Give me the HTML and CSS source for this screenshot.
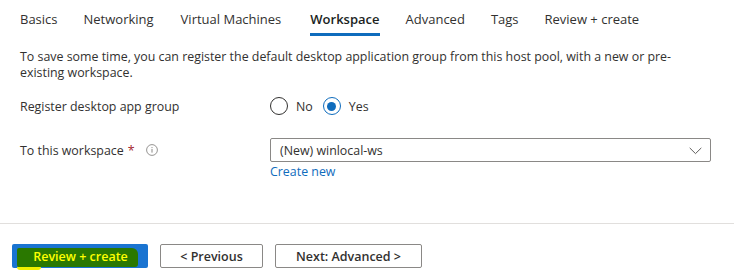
FILE: index.html
```html
<!DOCTYPE html>
<html>
<head>
<meta charset="utf-8">
<link rel="stylesheet" href="styles.css">
</head>
<body>
<div class="page">
  <nav class="tabs">
    <div class="tab">Basics</div>
    <div class="tab">Networking</div>
    <div class="tab tab-vm">Virtual Machines</div>
    <div class="tab active">Workspace</div>
    <div class="tab">Advanced</div>
    <div class="tab">Tags</div>
    <div class="tab">Review + create</div>
  </nav>
  <main class="content">
    <p class="intro">To save some time, you can register the default desktop application group from this host pool, with a new or pre-existing workspace.</p>
    <div class="row row-radio">
      <div class="label">Register desktop app group</div>
      <div class="control radios">
        <label class="radio"><span class="circle"></span><span>No</span></label>
        <label class="radio"><span class="circle checked"></span><span>Yes</span></label>
      </div>
    </div>
    <div class="row row-select">
      <div class="label">To this workspace <span class="req">*</span>
        <svg class="info" width="12" height="12" viewBox="0 0 12 12"><circle cx="6" cy="6" r="5.4" fill="none" stroke="#8a8886" stroke-width="0.9"/><rect x="5.5" y="5" width="1" height="3.6" fill="#8a8886"/><rect x="5.5" y="3.1" width="1" height="1" fill="#8a8886"/></svg>
      </div>
      <div class="control">
        <div class="select">
          <span>(New) winlocal-ws</span>
          <svg class="chev" width="13" height="8" viewBox="0 0 13 8"><path d="M0.7 0.9 L6.5 6.6 L12.3 0.9" fill="none" stroke="#605e5c" stroke-width="1"/></svg>
        </div>
        <a class="link">Create new</a>
      </div>
    </div>
  </main>
  <footer class="footer">
    <button class="btn primary"><span class="hl">Review + create</span><span class="hl-tail"></span></button>
    <button class="btn">&lt; Previous</button>
    <button class="btn next">Next: Advanced &gt;</button>
  </footer>
</div>
</body>
</html>
```
FILE: styles.css
```css
* { box-sizing: border-box; }
html, body { margin: 0; padding: 0; background: #fff; }
body {
  font-family: "Open Sans", "Noto Sans", sans-serif;
  font-size: 12.4px;
  color: #323130;
  width: 734px;
  height: 277px;
  overflow: hidden;
}
.page { display: flex; flex-direction: column; height: 277px; }
.tabs {
  display: flex;
  gap: 26px;
  padding: 0 0 0 20px;
  height: 36px;
}
.tab {
  height: 36px;
  line-height: 38px;
  font-size: 13px;
  color: #323130;
  border-bottom: 3px solid transparent;
  white-space: nowrap;
}
.tab-vm { margin-left: 1px; }
.tab.active {
  margin-left: 3px;
  font-weight: 600;
  border-bottom-color: #0f6cbd;
  color: #201f1e;
}
.content { padding: 0 20px; flex: 1; }
.intro {
  margin: 13px 0 0;
  line-height: 16px;
  max-width: 680px;
}
.row { display: flex; }
.label { width: 250px; flex: none; display: flex; align-items: center; }
.row-radio { margin-top: 13px; height: 24px; align-items: center; }
.radios { display: flex; gap: 10px; align-items: center; }
.radio { display: flex; align-items: center; gap: 8px; }
.circle {
  width: 18px; height: 18px;
  border: 1px solid #323130;
  border-radius: 50%;
  display: inline-flex; align-items: center; justify-content: center;
}
.circle.checked { border-color: #0f6cbd; }
.circle.checked::after {
  content: ""; width: 9px; height: 9px; border-radius: 50%; background: #0f6cbd;
}
.row-select { margin-top: 20px; }
.row-select .label { height: 24px; }
.req { color: #a4262c; margin-left: 4px; }
.info { margin-left: 11px; }
.control { flex: 1; }
.select {
  height: 24px;
  width: 441px;
  border: 1px solid #8a8886;
  border-radius: 2px;
  display: flex; align-items: center; justify-content: space-between;
  padding: 0 8px 0 9px;
}
.chev { margin-top: 1px; }
.link {
  display: block;
  color: #0f6cbd;
  line-height: 18px;
  margin-top: 1px;
}
.footer {
  border-top: 1px solid #e1dfdd;
  height: 54px;
  display: flex;
  align-items: flex-start;
  gap: 12px;
  padding: 20px 0 0 12px;
  margin-top: 1px;
}
.btn {
  height: 24px;
  font-family: inherit;
  font-size: 12.5px;
  font-weight: 600;
  color: #323130;
  background: #fff;
  border: 1px solid #8a8886;
  border-radius: 2px;
  padding: 0;
  width: 103px;
}
.btn.next { width: 147px; }
.primary {
  width: 136px;
  background: #1a74d1;
  border: none;
  position: relative;
  display: flex; align-items: center; justify-content: center;
}
.hl {
  position: absolute;
  left: 5px; right: 10px; top: 4px; bottom: 1px;
  background: #2a7800;
  color: #ffff00;
  border-radius: 2px 6px 3px 2px;
  display: flex; align-items: center; justify-content: center;
  padding-left: 12px;
  padding-right: 6px;
  line-height: 1;
}
.hl-tail {
  position: absolute;
  left: 5px; width: 24px; top: 23px; height: 3px;
  background: #f0f000;
  border-radius: 0 0 3px 3px;
}
```
